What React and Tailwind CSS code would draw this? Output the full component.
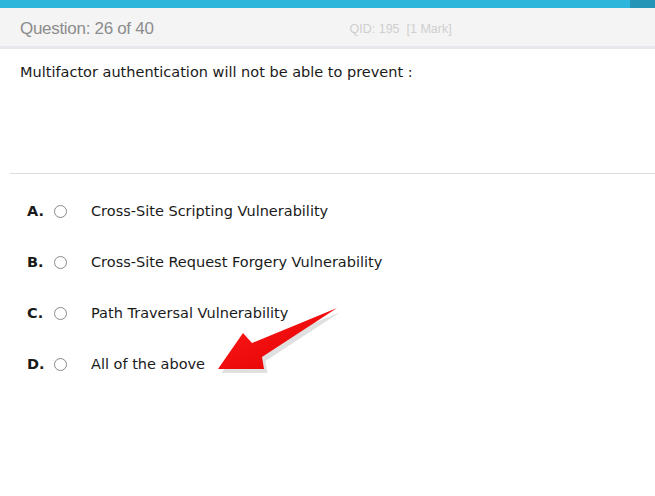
import React from "react";

const options = [
  { key: "A.", text: "Cross-Site Scripting Vulnerability" },
  { key: "B.", text: "Cross-Site Request Forgery Vulnerability" },
  { key: "C.", text: "Path Traversal Vulnerability" },
  { key: "D.", text: "All of the above" },
];

const Arrow = () => (
  <svg
    className="absolute left-0 top-0 pointer-events-none"
    width="655"
    height="496"
    viewBox="0 0 655 496"
  >
    <defs>
      <linearGradient id="arw" x1="0" y1="0" x2="1" y2="1">
        <stop offset="0" stopColor="#ff1a1a" />
        <stop offset="1" stopColor="#e00000" />
      </linearGradient>
    </defs>
    <polygon
      points="220,371 245,336 254,345 339,310 264,359 266,371"
      fill="#000"
      opacity="0.12"
      transform="translate(1.5,2)"
    />
    <polygon
      points="218,369 243,333 252,343 337,308 262,357 264,369"
      fill="url(#arw)"
    />
  </svg>
);

export default function App() {
  return (
    <div
      className="relative w-[655px] h-[496px] bg-white overflow-hidden"
      style={{ fontFamily: "'DejaVu Sans', Verdana, sans-serif" }}
    >
      <div className="flex h-[8px]">
        <div className="flex-1 bg-[#2cb6dc]" />
        <div className="w-[25px] bg-[#2495b6]" />
      </div>
      <div className="h-[41px] bg-[#f4f4f4] border-b-[3px] border-[#e6e8ec] flex items-center pt-[4px] font-['Liberation_Sans',Arial,sans-serif]">
        <span className="ml-[20px] text-[17px] text-[#8c8c8c] tracking-[-0.3px]">
          Question: 26 of 40
        </span>
        <span className="ml-[196px] text-[12.5px] text-[#cfcfcf]">
          QID: 195&nbsp; [1 Mark]
        </span>
      </div>
      <div className="pl-[20px] pt-[13px] text-[14.5px] text-[#1a1a1a]">
        Multifactor authentication will not be able to prevent :
      </div>
      <div className="ml-[10px] mt-[89px] border-t border-[#dcdcdc]" />
      <div className="flex flex-col gap-[31px] mt-[28px]">
        {options.map((o) => (
          <div key={o.key} className="flex items-center h-[20px] text-[14.5px] text-[#1a1a1a]">
            <span className="w-[27px] ml-[27px] font-bold">{o.key}</span>
            <span className="w-[13px] h-[13px] rounded-full border border-[#8a8a8a] bg-white" />
            <span className="ml-[24px]">{o.text}</span>
          </div>
        ))}
      </div>
      <Arrow />
    </div>
  );
}
